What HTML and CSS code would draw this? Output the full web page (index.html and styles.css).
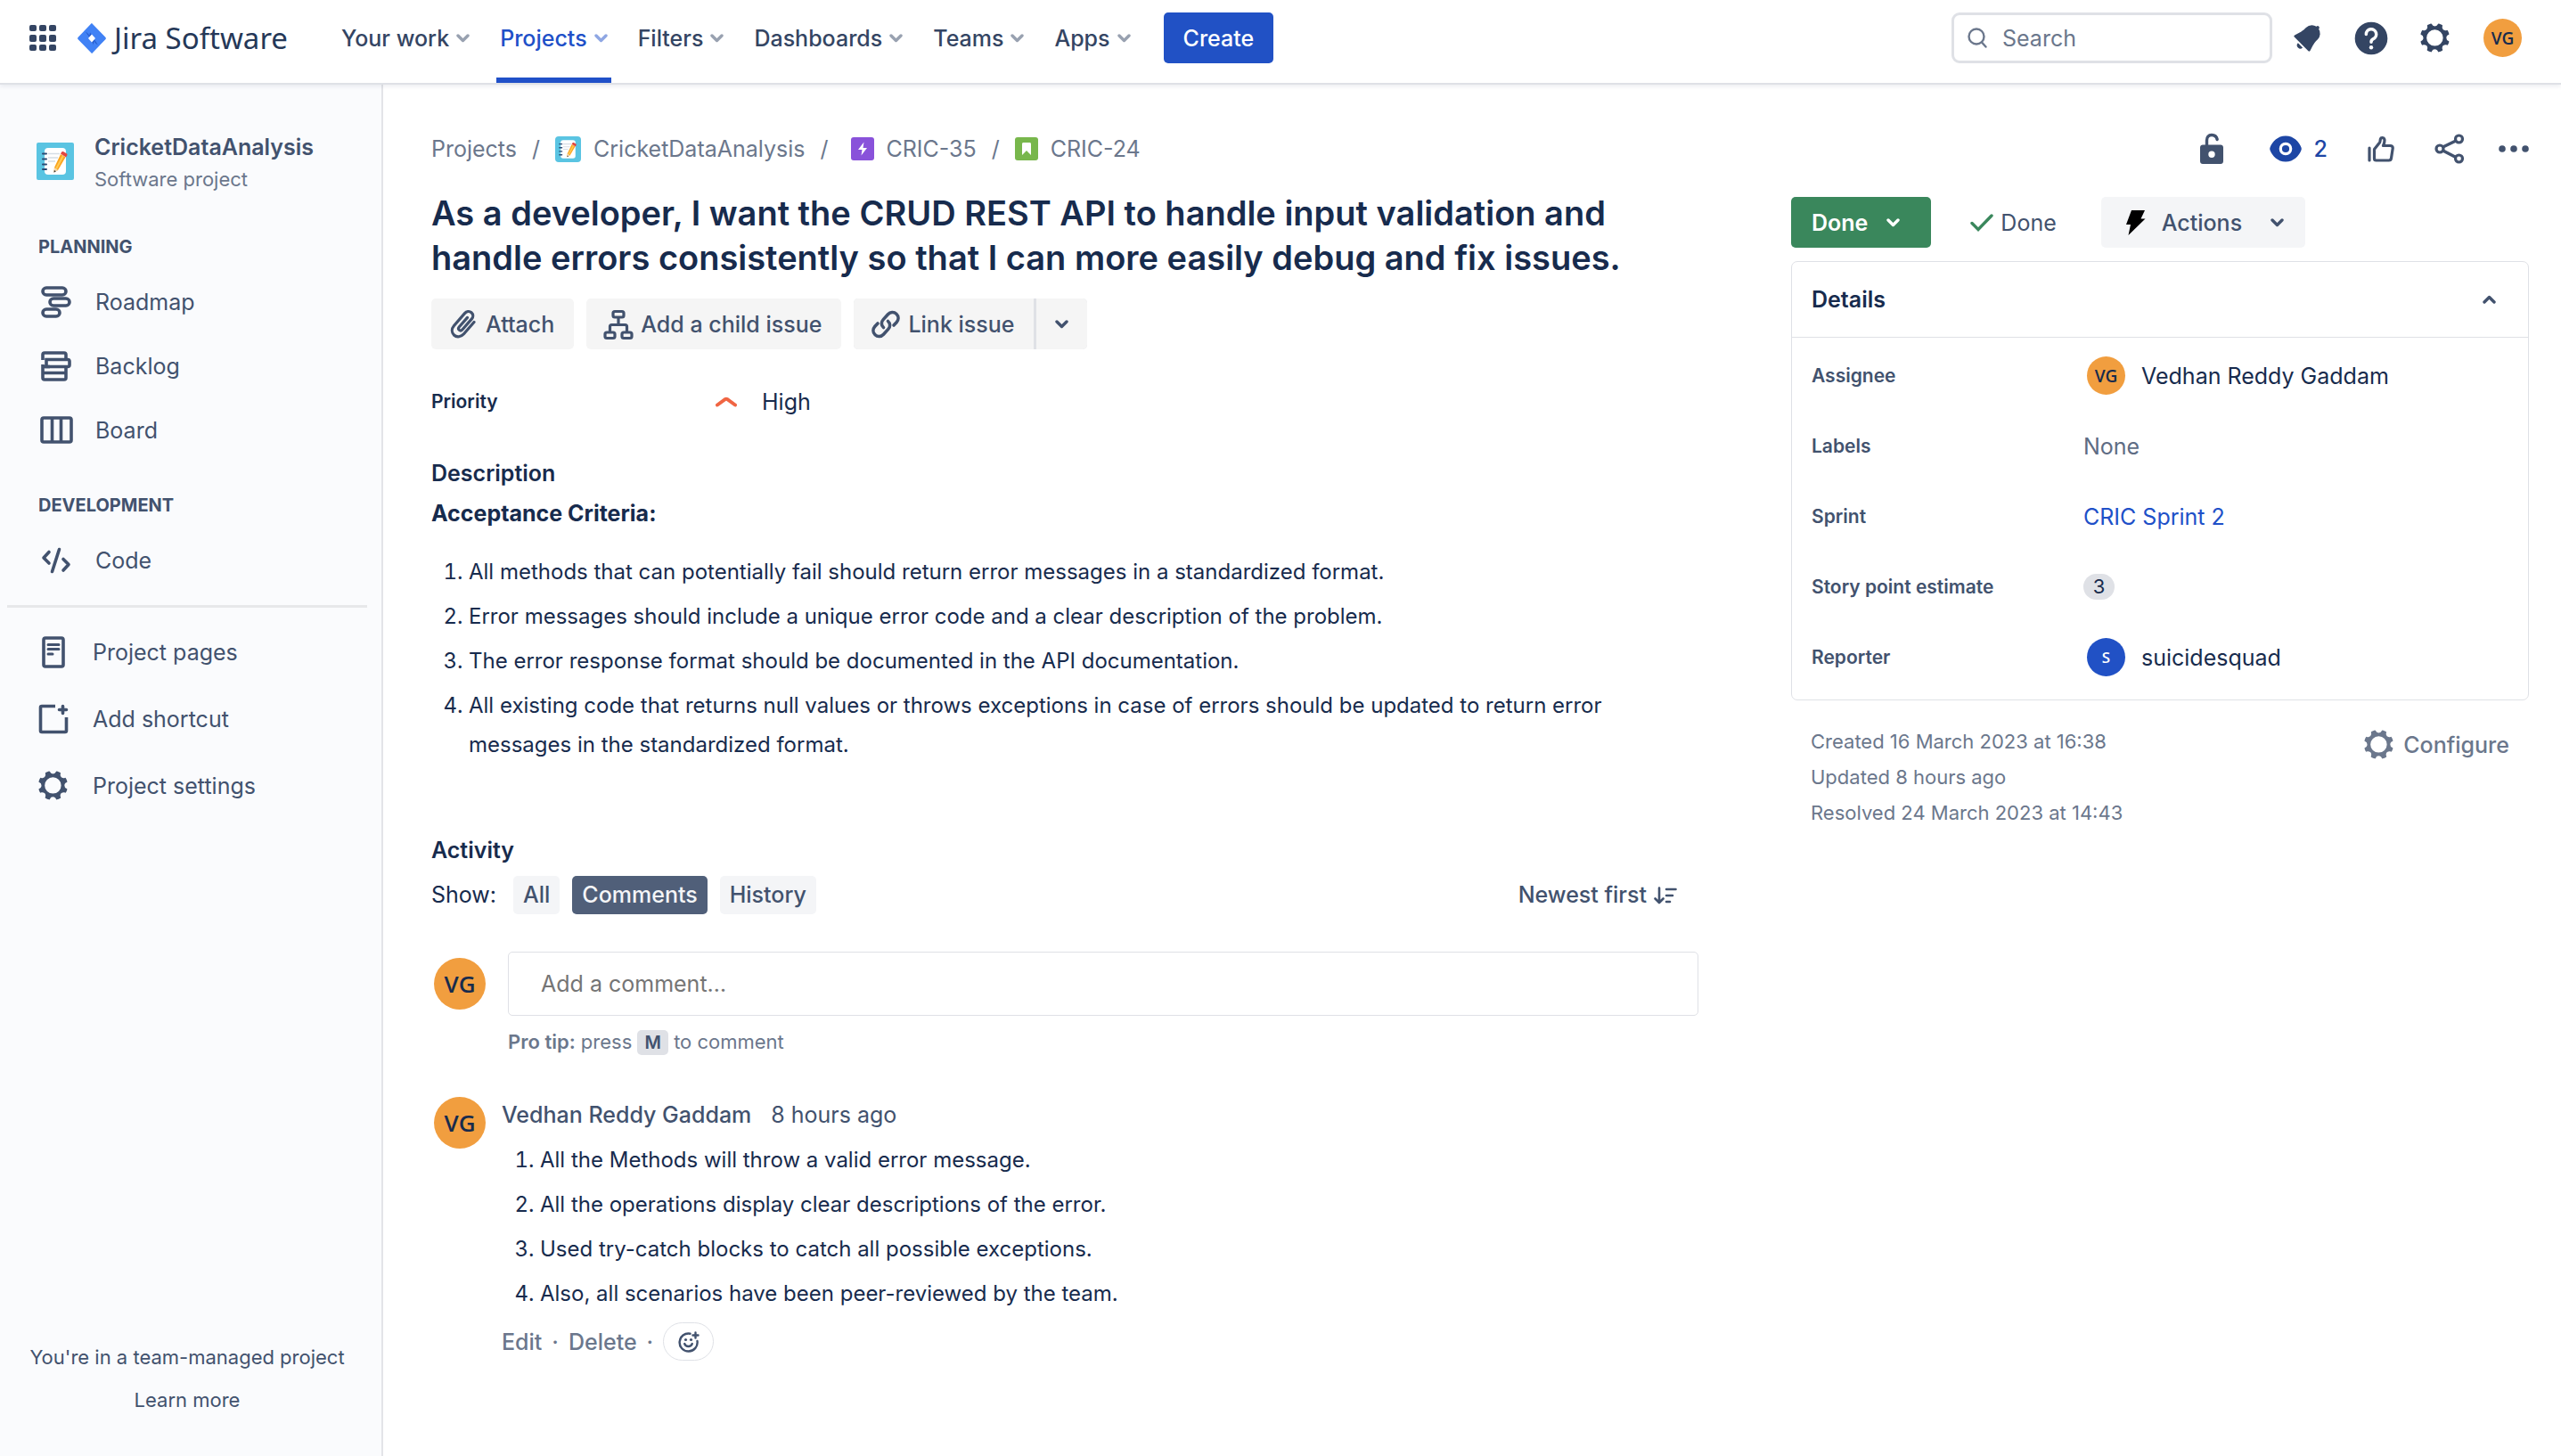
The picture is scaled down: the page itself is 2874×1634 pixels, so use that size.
FILE: index.html
```html
<!DOCTYPE html>
<html lang="en">
<head>
<meta charset="utf-8">
<title>CRIC-24 - Jira Software</title>
<link rel="stylesheet" href="styles.css">
</head>
<body>
<svg class="sprite" aria-hidden="true">
  <symbol id="chevron" viewBox="0 0 15 10"><path d="M2 2l5.500 5.500L13 2" fill="none" stroke="currentColor" stroke-width="3.400" stroke-linecap="round" stroke-linejoin="round"/></symbol>
  <symbol id="gear" viewBox="0 0 24 24"><path fill-rule="evenodd" fill="currentColor" d="M11.701 16.7a5.002 5.002 0 110-10.003 5.002 5.002 0 010 10.004m8.368-3.117a1.995 1.995 0 01-1.346-1.885c0-.876.563-1.613 1.345-1.885a.48.48 0 00.315-.574 8.947 8.947 0 00-.836-1.993.477.477 0 00-.598-.195 2.04 2.04 0 01-1.29.08 1.988 1.988 0 01-1.404-1.395 2.04 2.04 0 01.076-1.297.478.478 0 00-.196-.597 8.98 8.98 0 00-1.975-.826.479.479 0 00-.574.314 1.995 1.995 0 01-1.885 1.346 1.994 1.994 0 01-1.884-1.345.482.482 0 00-.575-.315c-.708.2-1.379.485-2.004.842a.47.47 0 00-.198.582A2.002 2.002 0 014.445 7.06a.478.478 0 00-.595.196 8.946 8.946 0 00-.833 1.994.48.48 0 00.308.572 1.995 1.995 0 011.323 1.877c0 .867-.552 1.599-1.324 1.877a.479.479 0 00-.308.57 8.99 8.99 0 00.723 1.79.477.477 0 00.624.194c.595-.273 1.343-.264 2.104.238.117.077.225.185.302.3.527.8.512 1.58.198 2.188a.473.473 0 00.168.628 8.946 8.946 0 002.11.897.474.474 0 00.57-.313 1.995 1.995 0 011.886-1.353c.878 0 1.618.567 1.887 1.353a.475.475 0 00.57.313 8.964 8.964 0 002.084-.883.473.473 0 00.167-.631c-.318-.608-.337-1.393.191-2.195.077-.116.185-.225.302-.302.772-.511 1.527-.513 2.125-.23a.477.477 0 00.628-.19 8.925 8.925 0 00.728-1.793.478.478 0 00-.314-.573"/></symbol>
  <symbol id="notebook" viewBox="0 0 42 42">
    <rect width="42" height="42" rx="2" fill="#5ac4e2"/>
    <rect x="9" y="6" width="24" height="30" rx="4" fill="#fff"/>
    <path d="M13 12.500h13M13 17h11M13 21h8" stroke="#d5dde5" stroke-width="1.500"/>
    <path d="M7 12.500h4M7 18.500h4M7 24.500h4M7 30h4" stroke="#2b4a73" stroke-width="2" stroke-linecap="round"/>
    <path d="M27 13l5.500 3.500L24 31l-4.500 2 .5-5z" fill="#fba51f"/>
    <path d="M29.800 15L22 29.500" stroke="#ffca55" stroke-width="2"/>
    <path d="M20 28l4 3-4.500 2.500z" fill="#f3d9b1"/><path d="M19.900 31l2 1.200-2.400 1.500z" fill="#333"/>
    <path d="M27 12.500l1-1.700c.6-.9 1.500-1 2.300-.6l3.400 2.100c.8.600 1 1.500.5 2.300l-1.200 1.900z" fill="#e2463f"/>
  </symbol>
</svg>

<header class="topbar">
  <button class="icon-btn" aria-label="Switch to">
    <svg width="30" height="30" viewBox="0 0 30 30" fill="currentColor"><rect width="8" height="7" rx="2"/><rect x="11" width="8" height="7" rx="2"/><rect x="22" width="8" height="7" rx="2"/><rect y="11" width="8" height="8" rx="2"/><rect x="11" y="11" width="8" height="8" rx="2"/><rect x="22" y="11" width="8" height="8" rx="2"/><rect y="22" width="8" height="7" rx="2"/><rect x="11" y="22" width="8" height="7" rx="2"/><rect x="22" y="22" width="8" height="7" rx="2"/></svg>
  </button>
  <a class="brand" href="#">
    <svg width="32" height="34" viewBox="0 0 32 34">
      <path d="M16 0l15.300 15.700c.8.800.8 1.800 0 2.600L16 34 .700 18.300c-.8-.8-.8-1.800 0-2.600z" fill="#4182f5"/>
      <path d="M15.500 1.500c-3 4-3 8 .5 11.500l-2.800 2.600L8.500 9z" fill="#2459c9"/>
      <path d="M16 33c3.200-4 3-8.500 0-12l2.800-2.800 4.500 6.800z" fill="#2459c9"/>
      <path d="M16 0L7 9.500c3 0 5.500 2 6.300 5z" fill="#4182f5"/>
      <path d="M16 34l9-9.500c-3 0-5.500-2-6.300-5z" fill="#4182f5"/>
      <path d="M16 12.600l4 4.400-4 4.400-4-4.400z" fill="#fff"/>
    </svg>
    <span>Jira Software</span>
  </a>
  <nav class="topnav" aria-label="Primary">
    <button>Your work<svg class="chev"><use href="#chevron"/></svg></button>
    <button class="current">Projects<svg class="chev"><use href="#chevron"/></svg></button>
    <button>Filters<svg class="chev"><use href="#chevron"/></svg></button>
    <button>Dashboards<svg class="chev"><use href="#chevron"/></svg></button>
    <button>Teams<svg class="chev"><use href="#chevron"/></svg></button>
    <button>Apps<svg class="chev"><use href="#chevron"/></svg></button>
  </nav>
  <button class="create">Create</button>
  <div class="topright">
    <label class="search">
      <svg width="22" height="23" viewBox="0 0 22 23" fill="none" stroke="currentColor" stroke-width="2.400" stroke-linecap="round"><circle cx="10" cy="10" r="8.500"/><path d="M16 16.500l4.500 5"/></svg>
      <input type="search" placeholder="Search" aria-label="Search">
    </label>
    <button class="icon-btn" aria-label="Notifications"><svg width="44" height="44" viewBox="0 0 24 24"><path fill="currentColor" d="M6.485 17.669a2 2 0 002.829 0l-2.829-2.830a2 2 0 000 2.830zm4.897-12.191l-.725.725c-.782.782-2.210 1.813-3.206 2.311l-3.017 1.509c-.495.248-.584.774-.187 1.171l8.556 8.556c.398.396.922.313 1.171-.188l1.510-3.016c.494-.988 1.526-2.420 2.311-3.206l.725-.726a5.048 5.048 0 00.640-6.356 1.010 1.010 0 10-1.354-1.494c-.023.025-.046.049-.066.075a5.043 5.043 0 00-2.788-.840 5.036 5.036 0 00-3.570 1.478z"/></svg></button>
    <button class="icon-btn" aria-label="Help"><svg width="44" height="44" viewBox="0 0 24 24"><circle cx="12" cy="12" r="10" fill="currentColor"/><path d="M8.900 9.500a3.100 3.100 0 1 1 4.400 2.800c-.9.400-1.300.9-1.300 2" fill="none" stroke="#fff" stroke-width="1.900" stroke-linecap="round"/><circle cx="12" cy="17.600" r="1.200" fill="#fff"/></svg></button>
    <button class="icon-btn" aria-label="Settings"><svg width="44" height="44"><use href="#gear"/></svg></button>
    <button class="icon-btn avatar-btn" aria-label="Your profile"><span class="avatar">VG</span></button>
  </div>
</header>

<div class="shell">
  <aside class="sidebar">
    <div class="project">
      <svg width="42" height="42"><use href="#notebook"/></svg>
      <div>
        <div class="project-name">CricketDataAnalysis</div>
        <div class="project-kind">Software project</div>
      </div>
    </div>
    <nav class="side-nav" aria-label="Project">
      <h2>Planning</h2>
      <a href="#"><svg viewBox="0 0 40 40"><g fill="none" stroke="currentColor" stroke-width="3.600"><rect x="5" y="4" width="26" height="8" rx="4"/><rect x="13" y="16" width="22" height="8" rx="4"/><rect x="5" y="28" width="19" height="8" rx="4"/></g></svg>Roadmap</a>
      <a href="#"><svg viewBox="0 0 40 40"><g fill="none" stroke="currentColor" stroke-width="3.600"><path d="M5 13V7c0-1.500 1-2 2-2h22c1.500 0 2 .8 2 2v5"/><path d="M9 12.500h24c1 0 2 .8 2 2v4c0 1.200-1 2-2 2H9z"/><path d="M5 18v15c0 1.200.8 2 2 2h22c1.200 0 2-.8 2-2V21M5 27.500h26M5 20.500h8"/></g></svg>Backlog</a>
      <a href="#"><svg viewBox="0 0 40 40"><g fill="none" stroke="currentColor" stroke-width="3.600"><rect x="4" y="6" width="33" height="27" rx="2"/><path d="M15.500 6v27M25.500 6v27"/></g></svg>Board</a>
      <h2>Development</h2>
      <a href="#"><svg viewBox="0 0 40 40"><g fill="none" stroke="currentColor" stroke-width="3.600" stroke-linecap="round" stroke-linejoin="round"><path d="M12 10.500L6 17l6 6M28 18.500l6 6-6 6.500M23.500 7.500l-8 25"/></g></svg>Code</a>
    </nav>
    <hr>
    <nav class="side-nav side-links" aria-label="Shortcuts">
      <a href="#"><svg viewBox="0 0 40 40"><g fill="none" stroke="currentColor" stroke-width="3.600"><rect x="9" y="4" width="22" height="32" rx="2"/><path d="M14 11.500h12M14 16.500h12M14 22h5" stroke-width="3" stroke-linecap="round"/></g></svg>Project pages</a>
      <a href="#"><svg viewBox="0 0 40 40"><g fill="none" stroke="currentColor" stroke-width="3.600"><path d="M22 5.500H7c-1 0-1.500.5-1.500 1.500v26c0 1 .5 1.500 1.500 1.500h26c1 0 1.500-.5 1.500-1.500V18"/><path d="M30.500 5.500v8M26.500 9.500h8" stroke-linecap="round"/></g></svg>Add shortcut</a>
      <a href="#"><svg class="gear"><use href="#gear"/></svg>Project settings</a>
    </nav>
    <div class="side-foot">
      <p>You're in a team-managed project</p>
      <a href="#">Learn more</a>
    </div>
  </aside>

  <main class="issue">
    <section class="content">
      <nav class="crumbs" aria-label="Breadcrumb">
        <a href="#">Projects</a><i>/</i>
        <a href="#"><svg class="crumb-project"><use href="#notebook"/></svg>CricketDataAnalysis</a><i class="wide">/</i>
        <a href="#"><svg width="26" height="26" viewBox="0 0 26 26"><rect width="26" height="26" rx="3" fill="#8952da"/><path d="M14.500 5.500L8 14h4.500l-1 6.500L18 12h-4.500z" fill="#fff"/></svg>CRIC-35</a><i>/</i>
        <a href="#"><svg width="26" height="26" viewBox="0 0 26 26"><rect width="26" height="26" rx="3" fill="#78b74c"/><path d="M9.500 6h7c.9 0 1.500.6 1.500 1.500V20l-5-5-5 5V7.500C8 6.600 8.600 6 9.500 6z" fill="#fff"/></svg>CRIC-24</a>
      </nav>
      <h1>As a developer, I want the CRUD REST API to handle input validation and handle errors consistently so that I can more easily debug and fix issues.</h1>
      <div class="tools">
        <button class="btn"><svg viewBox="0 0 34 36"><path d="M29 15.500L17.500 28.800c-2.800 3.200-7.800 4.200-11 1.200-3-2.900-2.700-7.300 0-10.500L18.500 5.600c1.900-2.200 5.300-2.800 7.500-.9 2.200 2 2.300 5 .4 7.200L15.800 24c-1 1.100-2.400 1.300-3.400.4-1-.9-1.100-2.300-.2-3.400l9.300-10.600" fill="none" stroke="currentColor" stroke-width="3.200" stroke-linecap="round" stroke-linejoin="round"/></svg>Attach</button>
        <button class="btn"><svg viewBox="0 0 34 36"><g fill="none" stroke="currentColor" stroke-width="3.200"><rect x="11" y="3.500" width="12" height="6.500" rx="2"/><rect x="2" y="27" width="11" height="6.500" rx="2"/><rect x="21" y="27" width="11" height="6.500" rx="2"/><path d="M17 10v8.500M7.500 27v-6.500c0-1.200.8-2 2-2h15c1.200 0 2 .8 2 2V27"/></g></svg>Add a child issue</button>
        <div class="split">
          <button class="btn"><svg viewBox="0 0 34 36"><g fill="none" stroke="currentColor" stroke-width="3.600" stroke-linecap="round" stroke-linejoin="round"><path d="M14.500 21.500c-2.800-2.500-2.800-6.200-.3-8.900l5.300-5.800c2.600-2.800 6.600-3.200 9.400-.6 2.900 2.700 2.700 6.700.2 9.500L26 19"/><path d="M19.500 14.500c2.800 2.500 2.800 6.200.3 8.900l-5.300 5.800c-2.600 2.800-6.600 3.200-9.400.6-2.900-2.700-2.700-6.700-.2-9.500L8 17"/></g></svg>Link issue</button>
          <button class="btn more" aria-label="More link options"><svg class="chev"><use href="#chevron"/></svg></button>
        </div>
      </div>
      <dl class="priority">
        <dt>Priority</dt>
        <dd><svg width="24" height="12" viewBox="0 0 24 12"><path d="M2 9.500l9-6.500c.7-.4 1.300-.4 2 0l9 6.500" fill="none" stroke="#f06543" stroke-width="4" stroke-linecap="round"/></svg>High</dd>
      </dl>
      <h2 class="head">Description</h2>
      <div class="prose">
        <p><strong>Acceptance Criteria:</strong></p>
        <ol>
          <li>All methods that can potentially fail should return error messages in a standardized format.</li>
          <li>Error messages should include a unique error code and a clear description of the problem.</li>
          <li>The error response format should be documented in the API documentation.</li>
          <li>All existing code that returns null values or throws exceptions in case of errors should be updated to return error messages in the standardized format.</li>
        </ol>
      </div>
      <h2 class="head activity">Activity</h2>
      <div class="filter">
        <span class="show">Show:</span>
        <button>All</button>
        <button class="on" aria-pressed="true">Comments</button>
        <button>History</button>
        <button class="sort">Newest first<svg width="26" height="20" viewBox="0 0 26 20"><g fill="none" stroke="currentColor" stroke-width="2.600" stroke-linecap="round" stroke-linejoin="round"><path d="M6 1.500v16M1.500 13.500L6 18l4.500-4.500M14 3h10.500M14 10h7M14 17h4"/></g></svg></button>
      </div>
      <div class="entry">
        <span class="avatar large">VG</span>
        <div class="compose">
          <input type="text" placeholder="Add a comment…" aria-label="Add a comment">
          <p class="tip"><strong>Pro tip:</strong> press <kbd>M</kbd> to comment</p>
        </div>
      </div>
      <article class="entry comment">
        <span class="avatar large">VG</span>
        <div class="comment-body">
          <div class="byline"><strong>Vedhan Reddy Gaddam</strong><span>8 hours ago</span></div>
          <ol>
            <li>All the Methods will throw a valid error message.</li>
            <li>All the operations display clear descriptions of the error.</li>
            <li>Used try-catch blocks to catch all possible exceptions.</li>
            <li>Also, all scenarios have been peer-reviewed by the team.</li>
          </ol>
          <div class="comment-actions">
            <button>Edit</button><span>·</span><button>Delete</button><span>·</span>
            <button class="react" aria-label="Add reaction"><svg width="24" height="24" viewBox="0 0 24 24"><g fill="none" stroke="currentColor" stroke-width="2.400" stroke-linecap="round"><path d="M13.500 2.700A10 10 0 1 0 21.500 11"/><path d="M7.200 14c.8 2 2.400 3 4.300 3s3.500-1 4.300-3M19.500 1.500v6M16.500 4.500h6"/></g><circle cx="8.500" cy="9.500" r="1.600" fill="currentColor"/><circle cx="14.500" cy="9.500" r="1.600" fill="currentColor"/></svg></button>
          </div>
        </div>
      </article>
    </section>

    <section class="context">
      <div class="quick">
        <button class="icon-btn" aria-label="Restrictions"><svg width="26" height="36" viewBox="0 0 26 36"><path d="M7.500 16V8.500c0-3.600 2-6 5.500-6s5.500 2 6.200 5" fill="none" stroke="currentColor" stroke-width="3.400" stroke-linecap="round"/><path d="M3 13.500h20c1.700 0 3 1.300 3 3V32c0 1.700-1.300 3-3 3H3c-1.700 0-3-1.300-3-3V16.500c0-1.700 1.300-3 3-3zM13 20.500a3.700 3.700 0 100 7.400 3.700 3.700 0 000-7.400z" fill="currentColor" fill-rule="evenodd"/></svg></button>
        <button class="icon-btn watch" aria-label="2 watchers"><svg width="36" height="30" viewBox="0 0 36 30"><path d="M18 .500C27 .500 33 7 35.500 13.500c.4 1 .4 2 0 3C33 23 27 29.500 18 29.500S3 23 .500 16.500c-.4-1-.4-2 0-3C3 7 9 .500 18 .500z" fill="currentColor"/><circle cx="18" cy="15" r="5.700" fill="none" stroke="#fff" stroke-width="3.200"/></svg>2</button>
        <button class="icon-btn" aria-label="Vote"><svg width="30" height="30" viewBox="0 0 30 30"><g fill="none" stroke="currentColor" stroke-width="3.200" stroke-linecap="round" stroke-linejoin="round"><path d="M2 14v14M7.500 26V15.500L13.500 8c.6-.8.500-2.500 1-4.200.5-1.600 3.800-1.500 4.300.4.500 2.200 0 4.500-1.300 7.300h8c1.700 0 3 1.300 2.700 3l-1.700 11c-.2 1.400-1.200 2.500-2.700 2.500H9.500c-1.200 0-2-.8-2-2z"/></g></svg></button>
        <button class="icon-btn" aria-label="Share"><svg width="34" height="34" viewBox="0 0 34 34"><g fill="none" stroke="currentColor" stroke-width="3.200"><circle cx="27.500" cy="6" r="4"/><circle cx="27.500" cy="28" r="4"/><circle cx="6" cy="17" r="4"/><path d="M9.500 15l14.500-7M9.500 19L24 26.500" stroke-width="3.600"/></g></svg></button>
        <button class="icon-btn" aria-label="Actions"><svg width="34" height="8" viewBox="0 0 34 8" fill="currentColor"><circle cx="4" cy="4" r="3.800"/><circle cx="17" cy="4" r="3.800"/><circle cx="30" cy="4" r="3.800"/></svg></button>
      </div>
      <div class="status">
        <button class="btn done">Done<svg class="chev"><use href="#chevron"/></svg></button>
        <span class="resolution"><svg width="26" height="20" viewBox="0 0 26 20"><path d="M2 10.500l7 7L24 2" fill="none" stroke="#3a875c" stroke-width="3.400" stroke-linecap="round"/></svg>Done</span>
        <button class="btn actions"><svg width="22" height="28" viewBox="0 0 22 28"><path d="M6 0h15l-4.500 9.500h5L2.500 28 5 16H0z" fill="#000"/></svg>Actions<svg class="chev"><use href="#chevron"/></svg></button>
      </div>
      <div class="panel">
        <button class="panel-head" aria-expanded="true">Details<svg class="chev up"><use href="#chevron"/></svg></button>
        <dl>
          <dt>Assignee</dt><dd class="person"><span class="avatar">VG</span>Vedhan Reddy Gaddam</dd>
          <dt>Labels</dt><dd class="none">None</dd>
          <dt>Sprint</dt><dd><a href="#">CRIC Sprint 2</a></dd>
          <dt>Story point estimate</dt><dd><span class="points">3</span></dd>
          <dt>Reporter</dt><dd class="person"><span class="avatar blue">S</span>suicidesquad</dd>
        </dl>
      </div>
      <div class="meta">
        <div class="dates"><p>Created 16 March 2023 at 16:38</p><p>Updated 8 hours ago</p><p>Resolved 24 March 2023 at 14:43</p></div>
        <button class="configure"><svg width="44" height="44"><use href="#gear"/></svg>Configure</button>
      </div>
    </section>
  </main>
</div>
</body>
</html>
```
FILE: styles.css
```css
* { box-sizing: border-box; }
body {
  margin: 0;
  min-height: 100vh;
  display: flex;
  flex-direction: column;
  font: 25px/40px Inter, "Liberation Sans", sans-serif;
  color: #172b4d;
  background: #fff;
}
h1, h2, p, ol, dl, dd { margin: 0; padding: 0; }
button { font: inherit; color: inherit; background: none; border: 0; padding: 0; cursor: pointer; }
a { color: inherit; text-decoration: none; }
svg { flex: none; display: block; }
.sprite { position: absolute; width: 0; height: 0; }
.chev { width: 15px; height: 10px; }
.icon-btn { display: flex; align-items: center; }
.btn {
  display: flex;
  align-items: center;
  height: 57px;
  border-radius: 5px;
  background: #f5f5f5;
  color: #42526e;
  font-weight: 500;
}

/* Top bar */
.topbar {
  position: relative;
  display: flex;
  align-items: center;
  height: 95px;
  padding: 0 44px 8px 33px;
  border-bottom: 2px solid #dfe1e6;
  box-shadow: 0 2px 5px rgba(9, 30, 66, 0.08);
  color: #344563;
}
.brand {
  display: flex;
  align-items: center;
  gap: 9px;
  margin-left: 24px;
  font: 33px/40px "Noto Sans", sans-serif;
  color: #253858;
}
.topnav { display: flex; align-self: stretch; gap: 26px; margin: 0 33px 0 56px; }
.topnav button { position: relative; display: flex; align-items: center; gap: 8px; padding: 0 4px; font-weight: 500; }
.topnav .chev { opacity: 0.5; }
.topnav .current { color: #2050c8; }
.topnav .current::after { content: ""; position: absolute; inset: auto 0 -8px; height: 6px; background: #2050c8; }
.create { height: 57px; padding: 0 22px; border-radius: 5px; background: #2151c5; color: #fff; font-weight: 500; }
.topright { display: flex; align-items: center; margin-left: auto; }
.search {
  display: flex;
  align-items: center;
  gap: 17px;
  width: 360px;
  height: 57px;
  margin-right: 17px;
  padding: 0 15px;
  border: 3px solid #dfe1e6;
  border-radius: 9px;
  color: #6b778c;
}
.search input { min-width: 0; flex: 1; border: 0; padding: 0; background: none; outline: 0; font: inherit; color: inherit; }
.search input::placeholder { color: #6b778c; opacity: 1; }
.topright .icon-btn + .icon-btn { margin-left: 28px; }
.topright .avatar-btn.icon-btn { margin-left: 32px; }
.avatar {
  flex: none;
  display: grid;
  place-items: center;
  width: 43px;
  height: 43px;
  border-radius: 50%;
  background: #f19e3f;
  color: #172b4d;
  font: 600 19px/24px "Open Sans", sans-serif;
}
.avatar.large { width: 58px; height: 58px; font-size: 26px; }
.avatar.blue { background: #2151c5; color: #fff; font-size: 17px; }

/* Sidebar */
.shell { flex: 1; display: flex; }
.sidebar {
  flex: none;
  display: flex;
  flex-direction: column;
  width: 430px;
  padding: 50px 0 39px;
  border-right: 2px solid #e3e4e8;
  background: #fafbfd;
  color: #42526e;
}
.project { display: flex; align-items: center; gap: 23px; padding: 0 41px; }
.project-name { font-weight: 600; }
.project-kind { font-size: 22px; line-height: 32px; color: #6b778c; }
.side-nav { display: flex; flex-direction: column; padding: 0 43px; }
.side-nav h2 { margin: 45px 0 11px; font-size: 20px; line-height: 30px; font-weight: 700; text-transform: uppercase; }
.side-nav a + h2 { margin-top: 33px; }
.side-nav a { display: flex; align-items: center; gap: 24px; height: 72px; }
.side-nav svg { width: 40px; height: 40px; }
.side-nav .gear { width: 44px; height: 44px; margin: -2px; }
.sidebar hr { width: 404px; height: 3px; margin: 14px 8px 12px; border: 0; background: #e7e8ea; }
.side-links { padding: 0 40px; }
.side-links a { height: 75px; }
.side-foot { margin-top: auto; padding-right: 8px; text-align: center; font-size: 22px; line-height: 48px; }

/* Issue */
.issue {
  flex: 1;
  min-width: 0;
  display: grid;
  grid-template-columns: minmax(0, 1422fr) minmax(0, 828fr);
  align-items: start;
  gap: 104px;
  padding: 52px 36px 40px 54px;
}
.crumbs { display: flex; align-items: center; gap: 17px; color: #6b778c; }
.crumbs a { display: flex; align-items: center; gap: 14px; }
.crumbs i { font-style: normal; }
.crumbs .wide { margin-right: 8px; }
.crumb-project { width: 29px; height: 29px; border-radius: 4px; }
h1 { margin-top: 27px; font-size: 38px; line-height: 50px; font-weight: 600; }
.tools { display: flex; gap: 14px; margin-top: 21px; }
.tools .btn { gap: 8px; padding: 0 22px 0 19px; }
.tools .btn svg { width: 34px; height: 36px; }
.split { display: flex; gap: 3px; background: #dfe1e6; border-radius: 5px; }
.split .btn:first-child { border-radius: 5px 0 0 5px; }
.split .btn.more { justify-content: center; width: 57px; padding: 0; border-radius: 0 5px 5px 0; }
.split .more .chev { width: 15px; height: 10px; }
.priority { display: grid; grid-template-columns: 319px 1fr; align-items: center; margin-top: 39px; }
.priority dt, .panel dt { font-size: 21px; font-weight: 600; }
.priority dd { display: flex; align-items: center; gap: 28px; }
.head { margin-top: 40px; font-size: 25px; font-weight: 600; }
.prose, .comment-body ol { line-height: 44px; }
.prose ol, .comment-body ol { font-size: 24px; }
.prose p { margin-top: 3px; }
.prose ol { margin-top: 22px; padding-left: 42px; }
li + li { margin-top: 6px; }
.head.activity { margin-top: 76px; }
.filter { display: flex; gap: 14px; margin-top: 9px; line-height: 43px; }
.filter button { padding: 0 11px; border-radius: 5px; background: #f4f5f7; color: #42526e; font-weight: 500; }
.filter .show { margin-right: 5px; }
.filter .on { background: #505f79; color: #f4f5f7; }
.filter .sort { display: flex; align-items: center; gap: 8px; margin: 0 24px 0 auto; padding: 0; background: none; }
.entry { display: flex; gap: 25px; margin-top: 42px; padding-left: 3px; }
.entry:not(.comment) .avatar { margin-top: 7px; }
.compose { flex: 1; }
.compose input {
  display: block;
  width: 100%;
  height: 72px;
  padding: 0 36px;
  border: 1px solid #dfe1e6;
  border-radius: 5px;
  font: inherit;
}
.compose input::placeholder { color: #757575; opacity: 1; }
.tip { margin-top: 14px; font-size: 22px; line-height: 30px; color: #6b778c; }
.tip strong { font-weight: 600; }
kbd { display: inline-block; padding: 0 8px; border-radius: 5px; background: #dfe1e6; color: #42526e; font: 600 20px/28px Inter, sans-serif; }
.comment { gap: 18px; margin-top: 47px; }
.byline { display: flex; gap: 22px; color: #42526e; }
.byline strong { font-weight: 500; }
.comment-body ol { margin-top: 9px; padding-left: 43px; }
.comment-actions { display: flex; align-items: center; gap: 11px; margin-top: 10px; color: #6b778c; font-weight: 500; }
.react { display: grid; place-items: center; width: 57px; height: 43px; border: 1px solid #dfe1e6; border-radius: 22px; color: #42526e; }

/* Right-hand column */
.quick { display: flex; align-items: center; justify-content: flex-end; height: 40px; gap: 38px; color: #42526e; }
.quick .icon-btn { margin-left: 7px; }
.quick .icon-btn:last-child { margin-left: 0; }
.quick .watch.icon-btn { margin-left: 14px; }
.quick .watch { gap: 14px; color: #1d46a5; font-weight: 500; }
.status { display: flex; align-items: center; margin-top: 34px; color: #42526e; }
.btn.done { gap: 21px; padding: 0 35px 0 23px; background: #3a875c; color: #fff; font-weight: 600; }
.resolution { display: flex; align-items: center; gap: 8px; margin: 0 50px 0 44px; }
.btn.actions { gap: 18px; padding: 0 24px 0 28px; background: #f4f5f7; }
.btn.actions .chev { margin-left: 14px; }
.panel { margin-top: 15px; padding-bottom: 8px; border: 1px solid #dfe1e6; border-radius: 7px; }
.panel-head {
  display: flex;
  align-items: center;
  justify-content: space-between;
  width: 100%;
  height: 85px;
  padding: 0 36px 0 22px;
  border-bottom: 1px solid #dfe1e6;
  font-weight: 600;
}
.chev.up { transform: rotate(180deg); color: #42526e; }
.panel dl { display: grid; grid-template-columns: 305px 1fr; grid-auto-rows: 79px; align-items: center; padding: 3px 22px 0; }
.panel dt { color: #42526e; }
.person { display: flex; align-items: center; gap: 18px; padding-left: 4px; }
.none { color: #5e6c84; }
.panel a { color: #2050c8; }
.points { display: block; width: 35px; border-radius: 15px; background: #dfe1e6; text-align: center; font-size: 22px; line-height: 29px; }
.meta { display: flex; justify-content: space-between; align-items: flex-start; padding: 26px 22px 0; color: #6b778c; }
.dates { font-size: 22px; }
.configure { display: flex; align-items: center; gap: 5px; height: 48px; font-weight: 500; }
```
